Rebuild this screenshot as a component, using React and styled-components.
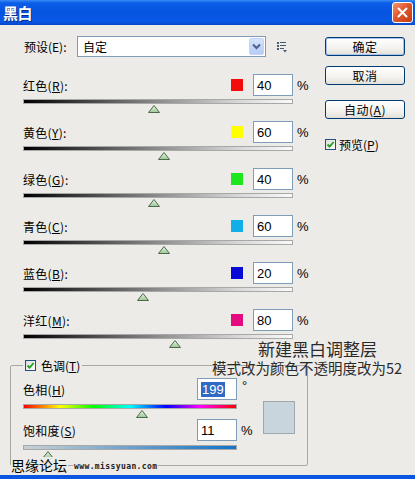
import React from 'react'
import styled, { createGlobalStyle } from 'styled-components'

const channels = [
  { name: '红色', key: 'R', color: '#f20c0c', value: 40 },
  { name: '黄色', key: 'Y', color: '#ffff00', value: 60 },
  { name: '绿色', key: 'G', color: '#1ee61e', value: 40 },
  { name: '青色', key: 'C', color: '#12aee8', value: 60 },
  { name: '蓝色', key: 'B', color: '#0a0ad8', value: 20 },
  { name: '洋红', key: 'M', color: '#e60a80', value: 80 },
]

const GlobalStyle = createGlobalStyle`
  html, body { margin: 0; padding: 0; }
  body {
    background: #ecebe8;
    font-family: "Liberation Sans", "Noto Sans CJK SC", sans-serif;
    font-size: 12px;
    color: #000;
  }
`

const Window = styled.div`
  position: relative;
  width: 415px;
  height: 479px;
  box-sizing: border-box;
  display: flex;
  flex-direction: column;
  background: #ecebe8;
  border-bottom: 4px solid #0b56e0;
  overflow: hidden;
`

const TitleBar = styled.div`
  height: 25px;
  flex-shrink: 0;
  display: flex;
  align-items: center;
  justify-content: space-between;
  padding: 0 2px 0 3px;
  background: linear-gradient(#3a8cf5 0%, #0a5de6 12%, #0653e0 50%, #0a58e6 85%, #0747c8 100%);
`

const Title = styled.span`
  color: #fff;
  font-family: "Noto Sans CJK SC", sans-serif;
  font-weight: 700;
  font-size: 15px;
  letter-spacing: -0.5px;
  text-shadow: 1px 1px 0 #0a2a80;
`

const CloseBtn = styled.div`
  width: 19px;
  height: 19px;
  border: 1px solid #fff;
  border-radius: 3px;
  background: linear-gradient(135deg, #f2946f 0%, #e0582e 45%, #c33a14 100%);
  display: flex;
  align-items: center;
  justify-content: center;
`

const Body = styled.div`
  flex: 1;
  display: flex;
  padding-top: 11px;
`

const Main = styled.div`
  width: 293px;
  padding-left: 10px;
  display: flex;
  flex-direction: column;
`

const PresetRow = styled.div`
  display: flex;
  align-items: center;
  height: 21px;
  padding-left: 14px;
`

const PresetLabel = styled.span`
  width: 53px;
  font-family: "Noto Sans CJK SC", sans-serif;
`

const Select = styled.div`
  width: 189px;
  height: 21px;
  box-sizing: border-box;
  border: 1px solid #7f9db9;
  background: #fff;
  display: flex;
  align-items: center;
  justify-content: space-between;
  padding: 1px 1px 1px 5px;
`

const ArrowBtn = styled.div`
  width: 15px;
  height: 17px;
  border-radius: 2px;
  background: linear-gradient(#d6e3fd, #b7cbf7);
  border: 1px solid #c3d3fd;
  box-sizing: border-box;
  display: flex;
  align-items: center;
  justify-content: center;
`

const MenuIcon = styled.svg`
  margin-left: 11px;
`

const ChannelList = styled.div`
  padding-left: 13px;
  margin-top: 17px;
`

const Row = styled.div`
  height: ${p => p.$h}px;
`

const Header = styled.div`
  display: flex;
  align-items: center;
  height: 22px;
  width: ${p => p.$w}px;
`

const Label = styled.span`
  flex: 1;
  font-family: "Noto Sans CJK SC", sans-serif;
  letter-spacing: 0.3px;
  u { text-underline-offset: 1px; }
`

const Swatch = styled.div`
  width: 12px;
  height: 12px;
  background: ${p => p.$c};
  margin-right: 10px;
`

const Field = styled.div`
  width: 40px;
  height: 22px;
  box-sizing: border-box;
  border: 1px solid #7f9db9;
  background: #fff;
  display: flex;
  align-items: center;
  padding-left: 3px;
  font-size: 13px;
`

const Selected = styled.span`
  background: #316ac5;
  color: #fff;
  padding: 0 1px;
`

const Unit = styled.span`
  width: ${p => p.$w}px;
  box-sizing: border-box;
  padding-left: ${p => p.$pad}px;
  font-size: 13px;
  align-self: ${p => (p.$top ? 'flex-start' : 'center')};
`

const Track = styled.div`
  position: relative;
  width: ${p => p.$w}px;
  height: 5px;
  margin-top: ${p => p.$gap}px;
  box-sizing: border-box;
  border: 1px solid #a8a8a8;
  background: ${p => p.$bg};
`

const Thumb = styled.svg`
  position: absolute;
  top: 5px;
  margin-left: -6px;
`

const GroupBox = styled.fieldset`
  margin: 8px 0 0 0;
  width: 294px;
  height: 109px;
  box-sizing: border-box;
  padding: 0 12px 0 12px;
  border: 1px solid #a9a9a4;
  border-radius: 2px;
`

const Legend = styled.legend`
  padding: 0 2px;
  margin-left: 0;
  height: 16px;
  display: flex;
  align-items: center;
  gap: 5px;
  font-family: "Noto Sans CJK SC", sans-serif;
`

const Check = styled.div`
  width: 11px;
  height: 11px;
  box-sizing: border-box;
  border: 1px solid #1c5180;
  background: linear-gradient(135deg, #dcdcd7, #fff);
  display: flex;
  align-items: center;
  justify-content: center;
`

const GroupBody = styled.div`
  display: flex;
  padding-top: 5px;
`

const Controls = styled.div`
  width: 238px;
`

const ToneSwatch = styled.div`
  width: 32px;
  height: 33px;
  margin: 23px 0 0 2px;
  box-sizing: border-box;
  border: 1px solid #a0a8ad;
  background: #c9d5dc;
`

const Side = styled.div`
  width: 80px;
  margin-left: 22px;
  padding-top: 1px;
  display: flex;
  flex-direction: column;
`

const Button = styled.div`
  height: 19px;
  box-sizing: border-box;
  margin-bottom: ${p => p.$mb}px;
  border: 1px solid #003c74;
  border-radius: 3px;
  background: linear-gradient(#ffffff 0%, #f3f2ee 60%, #e3e0d8 100%);
  box-shadow: ${p => (p.$default ? 'inset 0 0 0 1px #a8c3ee' : 'none')};
  display: flex;
  align-items: center;
  justify-content: center;
  font-family: "Noto Sans CJK SC", sans-serif;
  letter-spacing: 0.5px;
`

const CheckRow = styled.div`
  display: flex;
  align-items: center;
  gap: 3px;
  font-family: "Noto Sans CJK SC", sans-serif;
`

const Watermark = styled.div`
  position: absolute;
  left: 11px;
  top: 457px;
  height: 16px;
  display: flex;
  align-items: center;
  gap: 5px;
`

const WmName = styled.span`
  background: #ecebe8;
  font-family: "Noto Sans CJK SC", sans-serif;
  font-size: 14px;
  line-height: 16px;
  padding-right: 1px;
`

const WmUrl = styled.span`
  background: #ecebe8;
  font-family: "DejaVu Sans Mono", monospace;
  font-weight: 700;
  font-size: 8px;
  line-height: 9px;
  letter-spacing: 0.4px;
  color: #222;
  padding: 0 1px;
  margin-top: 3px;
`

const Note = styled.div`
  position: absolute;
  left: 212px;
  top: 339px;
  width: 190px;
  font-family: "Noto Sans CJK SC", sans-serif;
  color: #2a2a2a;
`

const NoteLine = styled.div`
  font-size: ${p => p.$size}px;
  line-height: ${p => p.$lh}px;
  padding-left: ${p => p.$indent}px;
  white-space: nowrap;
`

const ThumbIcon = ({ left }) => (
  <Thumb width="12" height="8" viewBox="0 0 12 8" style={{ left }}>
    <defs>
      <linearGradient id="tg" x1="0" y1="0" x2="0" y2="1">
        <stop offset="0" stopColor="#e8f4e6" />
        <stop offset="1" stopColor="#9cc796" />
      </linearGradient>
    </defs>
    <polygon points="6,0.5 11.5,7.5 0.5,7.5" fill="url(#tg)" stroke="#4d6b4a" strokeWidth="1" />
  </Thumb>
)

const CheckMark = () => (
  <svg width="9" height="9" viewBox="0 0 9 9">
    <path d="M1.5 4.5 L3.6 6.6 L7.6 2" fill="none" stroke="#21a121" strokeWidth="1.8" />
  </svg>
)

const grey = 'linear-gradient(to right, #000 0%, #3a3a3a 20%, #8c8c8c 50%, #d8d8d8 80%, #fafafa 100%)'
const hue = 'linear-gradient(to right, #ff0000, #ffff00 17%, #00ff00 33%, #00ffff 50%, #0000ff 67%, #ff00ff 83%, #ff0000)'
const sat = 'linear-gradient(to right, #c8d0d4, #1273c6)'

const ChannelRow = ({ ch, last }) => (
  <Row $h={last ? 40 : 47}>
    <Header $w={286}>
      <Label>{ch.name}(<u>{ch.key}</u>):</Label>
      <Swatch $c={ch.color} />
      <Field>{ch.value}</Field>
      <Unit $w={16} $pad={4}>%</Unit>
    </Header>
    <Track $w={270} $gap={3} $bg={grey}>
      <ThumbIcon left={((ch.value + 200) / 500) * 270} />
    </Track>
  </Row>
)

export default function App() {
  return (
    <>
      <GlobalStyle />
      <Window>
        <TitleBar>
          <Title>黑白</Title>
          <CloseBtn>
            <svg width="11" height="11" viewBox="0 0 11 11">
              <path d="M1.5 1.5 L9.5 9.5 M9.5 1.5 L1.5 9.5" stroke="#fff" strokeWidth="2" strokeLinecap="round" />
            </svg>
          </CloseBtn>
        </TitleBar>
        <Body>
          <Main>
            <PresetRow>
              <PresetLabel>预设(E):</PresetLabel>
              <Select>
                <span>自定</span>
                <ArrowBtn>
                  <svg width="9" height="7" viewBox="0 0 9 7">
                    <path d="M1 1.5 L4.5 5 L8 1.5" fill="none" stroke="#4d6185" strokeWidth="2" />
                  </svg>
                </ArrowBtn>
              </Select>
              <MenuIcon width="10" height="12" viewBox="0 0 10 12">
                <rect x="0" y="1" width="2" height="2" fill="#4a5a70" />
                <rect x="3" y="1" width="6" height="1" fill="#4a5a70" />
                <rect x="0" y="4" width="2" height="2" fill="#4a5a70" />
                <rect x="3" y="4" width="6" height="1" fill="#4a5a70" />
                <rect x="0" y="7" width="2" height="2" fill="#4a5a70" />
                <rect x="3" y="7" width="4" height="1" fill="#4a5a70" />
                <polygon points="6,9 10,9 8,11.5" fill="#4a5a70" />
              </MenuIcon>
            </PresetRow>

            <ChannelList>
              {channels.map((ch, i) => (
                <ChannelRow key={ch.key} ch={ch} last={i === channels.length - 1} />
              ))}
            </ChannelList>

            <GroupBox>
              <Legend>
                <Check><CheckMark /></Check>
                <span>色调(<u>T</u>)</span>
              </Legend>
              <GroupBody>
                <Controls>
                  <Row $h={41}>
                    <Header $w={238}>
                      <Label>色相(<u>H</u>)</Label>
                      <Field><Selected>199</Selected></Field>
                      <Unit $w={24} $pad={5} $top>°</Unit>
                    </Header>
                    <Track $w={214} $gap={4} $bg={hue}>
                      <ThumbIcon left={(199 / 360) * 214} />
                    </Track>
                  </Row>
                  <Row $h={37}>
                    <Header $w={238}>
                      <Label>饱和度(<u>S</u>)</Label>
                      <Field>11</Field>
                      <Unit $w={24} $pad={4}>%</Unit>
                    </Header>
                    <Track $w={214} $gap={4} $bg={sat}>
                      <ThumbIcon left={(11 / 100) * 214} />
                    </Track>
                  </Row>
                </Controls>
                <ToneSwatch />
              </GroupBody>
            </GroupBox>
          </Main>

          <Side>
            <Button $default $mb={10}>确定</Button>
            <Button $mb={15}>取消</Button>
            <Button $mb={17}>自动(<u>A</u>)</Button>
            <CheckRow>
              <Check><CheckMark /></Check>
              <span>预览(<u>P</u>)</span>
            </CheckRow>
          </Side>
        </Body>

        <Note>
          <NoteLine $size={17} $lh={20} $indent={46}>新建黑白调整层</NoteLine>
          <NoteLine $size={14.5} $lh={17} $indent={0}>模式改为颜色不透明度改为52</NoteLine>
        </Note>

        <Watermark>
          <WmName>思缘论坛</WmName>
          <WmUrl>www.missyuan.com</WmUrl>
        </Watermark>
      </Window>
    </>
  )
}
